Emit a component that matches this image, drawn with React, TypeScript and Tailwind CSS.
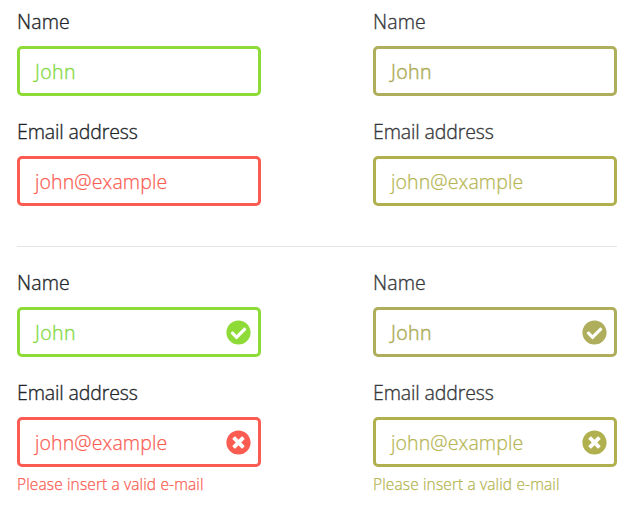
import { FaCheckCircle, FaTimesCircle } from "react-icons/fa";

type Tone = {
  border: string;
  text: string;
  icon: string;
};

type Palette = { label: string; valid: Tone; invalid: Tone };

const normal: Palette = {
  label: "text-[#212529]",
  valid: { border: "border-[#8edb38]", text: "text-[#83d944] [-webkit-text-stroke:0.35px_currentColor]", icon: "text-[#8edb38]" },
  invalid: { border: "border-[#fa5c52]", text: "text-[#fa5c52] [-webkit-text-stroke:0.25px_currentColor]", icon: "text-[#fa5c52]" },
};

const colorBlind: Palette = {
  label: "text-[#35373a]",
  valid: { border: "border-[#aeae5c]", text: "text-[#aeae5c] [-webkit-text-stroke:0.5px_currentColor]", icon: "text-[#aeae5c]" },
  invalid: { border: "border-[#b0b04e]", text: "text-[#b5b552] [-webkit-text-stroke:0.25px_currentColor]", icon: "text-[#b0b04e]" },
};

function Field({ label, value, tone, labelColor, icon, labelSpacing, valueSpacing }: {
  label: string;
  value: string;
  tone: Tone;
  labelColor: string;
  icon?: "check" | "times";
  labelSpacing: string;
  valueSpacing: string;
}) {
  return (
    <div>
      <div className={`h-[38px] text-[19.5px] leading-[28px] font-light whitespace-nowrap [-webkit-text-stroke:0.35px_currentColor] ${labelSpacing} ${labelColor}`}>{label}</div>
      <div className={`flex h-[50px] items-center justify-between rounded-[5px] border-[3px] pr-[7px] pl-[15px] ${tone.border}`}>
        <span className={`pt-px text-[19.5px] leading-[28px] font-light whitespace-nowrap ${valueSpacing} ${tone.text}`}>{value}</span>
        {icon === "check" && <FaCheckCircle className={`size-[25px] ${tone.icon}`} />}
        {icon === "times" && <FaTimesCircle className={`size-[25px] ${tone.icon}`} />}
      </div>
    </div>
  );
}

function Form({ palette, feedback }: { palette: Palette; feedback: boolean }) {
  return (
    <div className="flex w-[244px] flex-col gap-[22px]">
      <Field label="Name" value="John" tone={palette.valid} labelColor={palette.label} labelSpacing="tracking-[0.15px]" valueSpacing="tracking-[0.4px]" icon={feedback ? "check" : undefined} />
      <div>
        <Field label="Email address" value="john@example" tone={palette.invalid} labelColor={palette.label} labelSpacing="tracking-[-0.12px]" valueSpacing="tracking-[0.12px]" icon={feedback ? "times" : undefined} />
        {feedback && (
          <p className={`mt-[6px] text-[15.5px] leading-[22px] font-light tracking-[0.13px] whitespace-nowrap ${palette.invalid.text}`}>Please insert a valid e-mail</p>
        )}
      </div>
    </div>
  );
}

export default function App() {
  return (
    <main className="h-[512px] w-[634px] bg-white px-[17px] pt-[8px] font-['Open_Sans',sans-serif]">
      <section className="flex justify-between">
        <Form palette={normal} feedback={false} />
        <Form palette={colorBlind} feedback={false} />
      </section>
      <hr className="mt-[40px] mb-[22px] border-[#e5e5e5]" />
      <section className="flex justify-between">
        <Form palette={normal} feedback />
        <Form palette={colorBlind} feedback />
      </section>
    </main>
  );
}
